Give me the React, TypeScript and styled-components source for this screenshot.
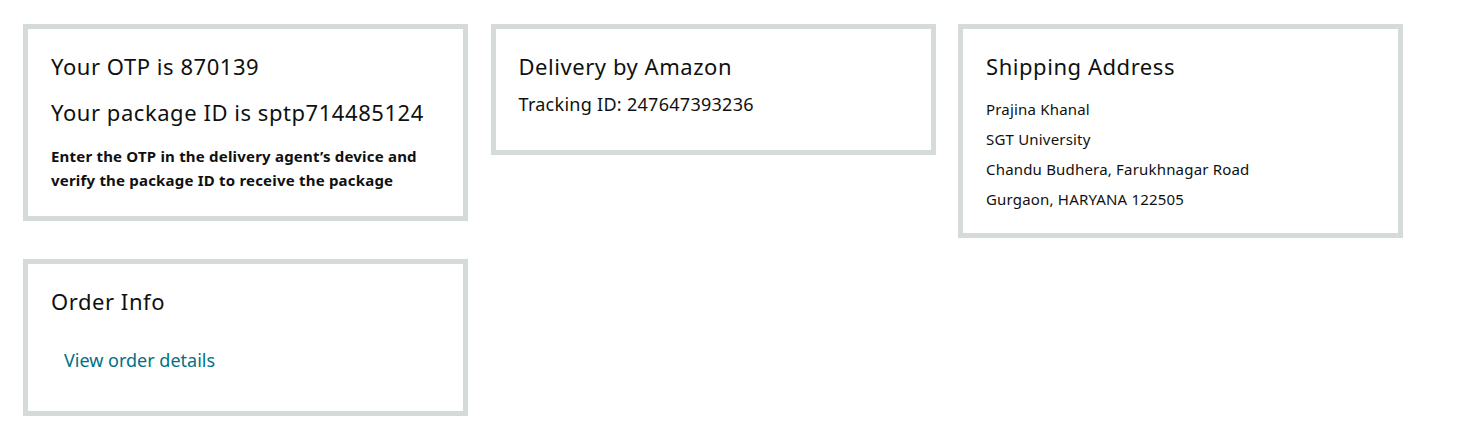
import React from "react";
import styled, { createGlobalStyle } from "styled-components";

const GlobalStyle = createGlobalStyle`
  html, body {
    margin: 0;
    padding: 0;
    background: #ffffff;
  }
  body {
    font-family: "Noto Sans", "Open Sans", Arial, sans-serif;
    color: #0f1111;
  }
`;

const Page = styled.div`
  padding: 24px 0 0 23px;
`;

const Columns = styled.div`
  display: flex;
  align-items: flex-start;
  gap: 22.5px;
`;

const Column = styled.div`
  width: 445px;
  display: flex;
  flex-direction: column;
  gap: 38px;
`;

const Card = styled.section<{ $padBottom: number }>`
  box-sizing: border-box;
  border: 5px solid #d5dbdb;
  padding: 21.5px 23px ${(p) => p.$padBottom}px;
  background: #fff;
`;

const Title = styled.h3<{ $mb?: number }>`
  margin: 0 0 ${(p) => p.$mb ?? 0}px;
  font-size: 22px;
  line-height: 30px;
  font-weight: 400;
  letter-spacing: 0.55px;
  color: #0f1111;
`;

const Note = styled.p`
  margin: 0;
  font-size: 15px;
  line-height: 24px;
  font-weight: 700;
  letter-spacing: 0.2px;
  color: #0f1111;
`;

const Tracking = styled.p`
  margin: 0;
  font-size: 18px;
  line-height: 24px;
  letter-spacing: 0.28px;
  color: #0f1111;
`;

const AddressList = styled.ul`
  list-style: none;
  margin: 0;
  padding: 0;
`;

const AddressLine = styled.li`
  font-size: 15px;
  line-height: 30px;
  letter-spacing: 0.19px;
  color: #0f1111;
`;

const LinkRow = styled.div`
  padding-left: 13px;
`;

const OrderLink = styled.a`
  font-size: 18px;
  line-height: 24px;
  color: #007185;
  text-decoration: none;
`;

export default function App() {
  return (
    <>
      <GlobalStyle />
      <Page>
        <Columns>
          <Column>
            <Card $padBottom={24}>
              <Title $mb={16}>Your OTP is 870139</Title>
              <Title $mb={17.5}>Your package ID is sptp714485124</Title>
              <Note>
                Enter the OTP in the delivery agent’s device and verify the package ID to receive the package
              </Note>
            </Card>
            <Card $padBottom={39.5}>
              <Title $mb={32}>Order Info</Title>
              <LinkRow>
                <OrderLink href="#">View order details</OrderLink>
              </LinkRow>
            </Card>
          </Column>
          <Column>
            <Card $padBottom={34}>
              <Title $mb={11.5}>Delivery by Amazon</Title>
              <Tracking>Tracking ID: 247647393236</Tracking>
            </Card>
          </Column>
          <Column>
            <Card $padBottom={19}>
              <Title $mb={13.5}>Shipping Address</Title>
              <AddressList>
                <AddressLine>Prajina Khanal</AddressLine>
                <AddressLine>SGT University</AddressLine>
                <AddressLine>Chandu Budhera, Farukhnagar Road</AddressLine>
                <AddressLine>Gurgaon, HARYANA 122505</AddressLine>
              </AddressList>
            </Card>
          </Column>
        </Columns>
      </Page>
    </>
  );
}
